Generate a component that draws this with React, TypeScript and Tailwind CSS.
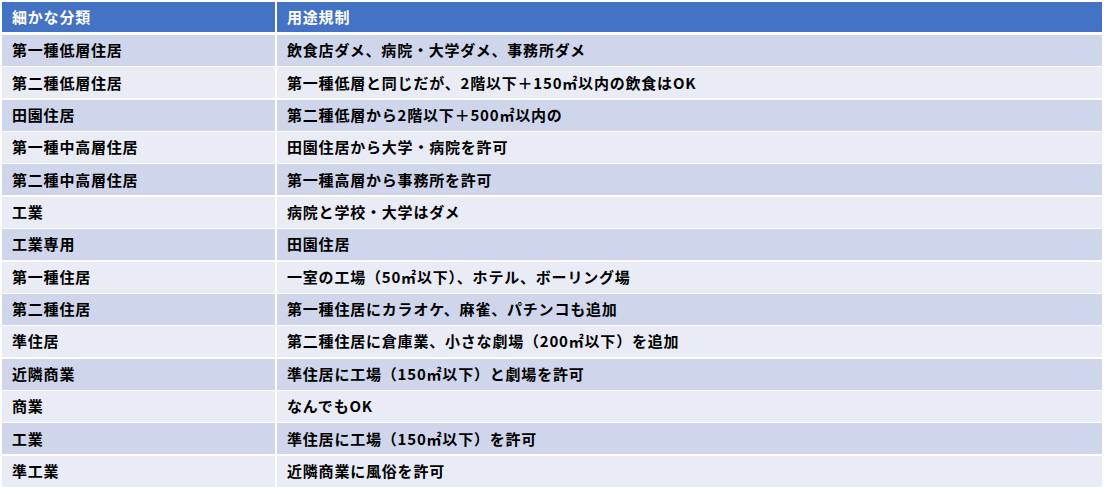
import React from "react";

const rows: [string, string][] = [
  ["第一種低層住居", "飲食店ダメ、病院・大学ダメ、事務所ダメ"],
  ["第二種低層住居", "第一種低層と同じだが、2階以下＋150㎡以内の飲食はOK"],
  ["田園住居", "第二種低層から2階以下＋500㎡以内の"],
  ["第一種中高層住居", "田園住居から大学・病院を許可"],
  ["第二種中高層住居", "第一種高層から事務所を許可"],
  ["工業", "病院と学校・大学はダメ"],
  ["工業専用", "田園住居"],
  ["第一種住居", "一室の工場（50㎡以下）、ホテル、ボーリング場"],
  ["第二種住居", "第一種住居にカラオケ、麻雀、パチンコも追加"],
  ["準住居", "第二種住居に倉庫業、小さな劇場（200㎡以下）を追加"],
  ["近隣商業", "準住居に工場（150㎡以下）と劇場を許可"],
  ["商業", "なんでもOK"],
  ["工業", "準住居に工場（150㎡以下）を許可"],
  ["準工業", "近隣商業に風俗を許可"],
];

export default function App() {
  return (
    <div
      className="w-[1106px] h-[492px] bg-white pt-[2px] pl-[2px] pr-[4px]"
      style={{ fontFamily: '"Noto Sans CJK JP", "Noto Sans", sans-serif' }}
    >
      <div className="flex flex-col">
        <div className="flex h-[30px] gap-[2px] text-white text-[15px] font-semibold tracking-[0.8px]">
          <div className="w-[273px] bg-[#4472c4] flex items-center pl-[10px]">細かな分類</div>
          <div className="flex-1 bg-[#4472c4] flex items-center pl-[10px]">用途規制</div>
        </div>
        <div className="flex flex-col gap-[1.36px] mt-[3px]">
          {rows.map(([a, b], i) => (
            <div
              key={i}
              className="flex h-[31px] gap-[2px] text-black text-[15px] font-semibold tracking-[0.8px]"
            >
              <div
                className={
                  "w-[273px] flex items-center pl-[10px] " +
                  (i % 2 === 0 ? "bg-[#cfd5ea]" : "bg-[#e9ebf5]")
                }
              >
                {a}
              </div>
              <div
                className={
                  "flex-1 flex items-center pl-[10px] " +
                  (i % 2 === 0 ? "bg-[#cfd5ea]" : "bg-[#e9ebf5]")
                }
              >
                {b}
              </div>
            </div>
          ))}
        </div>
      </div>
    </div>
  );
}
